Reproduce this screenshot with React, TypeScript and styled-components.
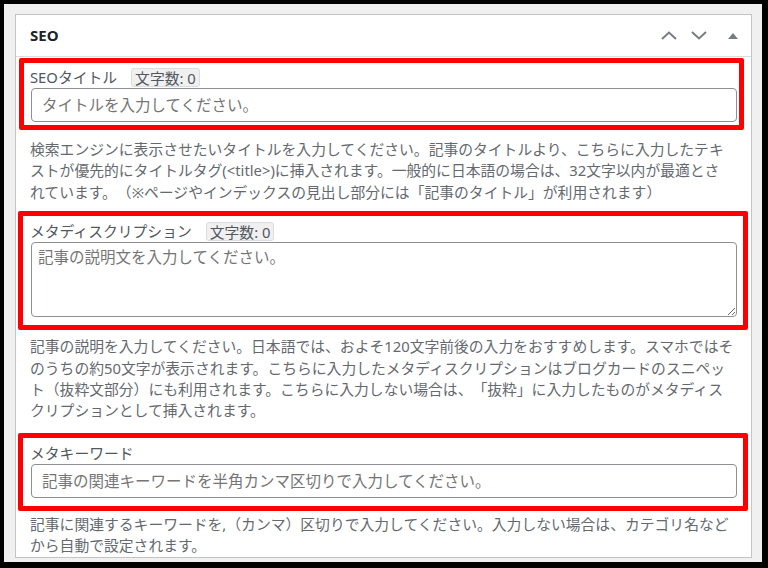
import React from "react";
import styled, { createGlobalStyle } from "styled-components";

const GlobalStyle = createGlobalStyle`
  html, body {
    margin: 0;
    background: #000;
  }
  body {
    font-family: "Noto Sans", "Noto Sans CJK JP", sans-serif;
    text-spacing-trim: space-all;
  }
  * {
    box-sizing: border-box;
  }
`;

type Inset = { top: number; right: number; bottom: number; left: number };

const Frame = styled.div`
  width: 768px;
  height: 568px;
  padding: 4px 6px 6px 4px;
  background: #000;
`;

const Screen = styled.div`
  height: 100%;
  overflow: hidden;
  background: #f0f0f1;
  padding: 10px 10px 0 11px;
`;

const Panel = styled.section`
  background: #fff;
  border: 1px solid #c3c4c7;
`;

const PanelHeader = styled.header`
  display: flex;
  align-items: center;
  justify-content: space-between;
  height: 42px;
  padding-left: 14px;
  border-bottom: 1px solid #dcdcde;
`;

const PanelTitle = styled.h2`
  margin: 0;
  font-size: 15px;
  font-weight: 700;
  color: #1d2327;
  line-height: 1;
`;

const HeaderActions = styled.div`
  display: flex;
  align-items: center;
  height: 100%;
`;

const HandleButton = styled.button<{ $width: number }>`
  display: flex;
  align-items: center;
  justify-content: center;
  width: ${(p) => p.$width}px;
  height: 100%;
  padding: 0;
  border: 0;
  background: none;
  color: #787c82;
  cursor: pointer;
`;

const PanelBody = styled.div`
  padding: 10px 14px 0 14px;
`;

// each field group carries a red highlight frame drawn over it
const Field = styled.div<{ $box: Inset; $mt: number }>`
  position: relative;
  margin-top: ${(p) => p.$mt}px;

  &::after {
    content: "";
    position: absolute;
    top: ${(p) => -p.$box.top}px;
    right: ${(p) => -p.$box.right}px;
    bottom: ${(p) => -p.$box.bottom}px;
    left: ${(p) => -p.$box.left}px;
    border: 5px solid #ff0000;
    border-radius: 2px;
    pointer-events: none;
  }
`;

const LabelRow = styled.div`
  display: flex;
  align-items: center;
  height: 20px;
  margin-bottom: 1px;
`;

const Label = styled.label`
  font-size: 14.8px;
  line-height: 20px;
  color: #50575e;
`;

const Counter = styled.span`
  display: inline-flex;
  align-items: center;
  height: 19px;
  margin-left: 14px;
  padding: 0 3px;
  font-size: 14.8px;
  font-weight: 400;
  color: #50575e;
  background: #f0f0f1;
  border: 1px solid #dcdcde;
  border-radius: 3px;
`;

const TextInput = styled.input`
  display: block;
  width: calc(100% - 1px);
  height: 34px;
  margin-left: 1px;
  padding: 0 10px;
  font-family: inherit;
  font-size: 15.5px;
  color: #2c3338;
  background: #fff;
  border: 1px solid #8c8f94;
  border-radius: 4px;
  outline: none;

  &::placeholder {
    color: #757575;
  }
`;

const TextArea = styled.textarea`
  display: block;
  width: calc(100% - 1px);
  height: 75px;
  margin-left: 1px;
  padding: 4px 6px;
  font-family: inherit;
  font-size: 15.5px;
  line-height: 21px;
  color: #2c3338;
  border: 1px solid #8c8f94;
  border-radius: 4px;
  outline: none;

  &::placeholder {
    color: #757575;
  }
`;

const Description = styled.p<{ $mt: number }>`
  margin: ${(p) => p.$mt}px 0 0;
  font-size: 14.8px;
  line-height: 21.4px;
  color: #646970;
  white-space: nowrap;
`;

const ChevronUp = () => (
  <svg width="16" height="9" viewBox="0 0 16 9" fill="none">
    <path d="M1 8L8 1.5L15 8" stroke="currentColor" strokeWidth="2" />
  </svg>
);

const ChevronDown = () => (
  <svg width="16" height="9" viewBox="0 0 16 9" fill="none">
    <path d="M1 1L8 7.5L15 1" stroke="currentColor" strokeWidth="2" />
  </svg>
);

const Caret = () => (
  <svg width="10" height="6" viewBox="0 0 10 6">
    <path d="M0 6L5 0L10 6Z" fill="currentColor" />
  </svg>
);

export default function App() {
  return (
    <>
      <GlobalStyle />
      <Frame>
        <Screen>
          <Panel>
            <PanelHeader>
              <PanelTitle>SEO</PanelTitle>
              <HeaderActions>
                <HandleButton $width={30} aria-label="上へ移動">
                  <ChevronUp />
                </HandleButton>
                <HandleButton $width={30} aria-label="下へ移動">
                  <ChevronDown />
                </HandleButton>
                <HandleButton $width={37} aria-label="パネルを切り替え">
                  <Caret />
                </HandleButton>
              </HeaderActions>
            </PanelHeader>

            <PanelBody>
              <Field $mt={0} $box={{ top: 9, right: 7, bottom: 8, left: 11 }}>
                <LabelRow>
                  <Label>SEOタイトル</Label>
                  <Counter>文字数: 0</Counter>
                </LabelRow>
                <TextInput placeholder="タイトルを入力してください。" />
              </Field>
              <Description $mt={17}>
                検索エンジンに表示させたいタイトルを入力してください。記事のタイトルより、こちらに入力したテキ
                <br />
                ストが優先的にタイトルタグ(&lt;title&gt;)に挿入されます。一般的に日本語の場合は、32文字以内が最適とさ
                <br />
                れています。（※ページやインデックスの見出し部分には「記事のタイトル」が利用されます）
              </Description>

              <Field $mt={18} $box={{ top: 10, right: 11, bottom: 13, left: 12 }}>
                <LabelRow>
                  <Label>メタディスクリプション</Label>
                  <Counter>文字数: 0</Counter>
                </LabelRow>
                <TextArea placeholder="記事の説明文を入力してください。" />
              </Field>
              <Description $mt={19}>
                記事の説明を入力してください。日本語では、およそ120文字前後の入力をおすすめします。スマホではそ
                <br />
                のうちの約50文字が表示されます。こちらに入力したメタディスクリプションはブログカードのスニペッ
                <br />
                ト（抜粋文部分）にも利用されます。こちらに入力しない場合は、「抜粋」に入力したものがメタディス
                <br />
                クリプションとして挿入されます。
              </Description>

              <Field $mt={21} $box={{ top: 10, right: 11, bottom: 13, left: 12 }}>
                <LabelRow>
                  <Label>メタキーワード</Label>
                </LabelRow>
                <TextInput placeholder="記事の関連キーワードを半角カンマ区切りで入力してください。" />
              </Field>
              <Description $mt={16}>
                記事に関連するキーワードを,（カンマ）区切りで入力してください。入力しない場合は、カテゴリ名など
                <br />
                から自動で設定されます。
              </Description>
            </PanelBody>
          </Panel>
        </Screen>
      </Frame>
    </>
  );
}
